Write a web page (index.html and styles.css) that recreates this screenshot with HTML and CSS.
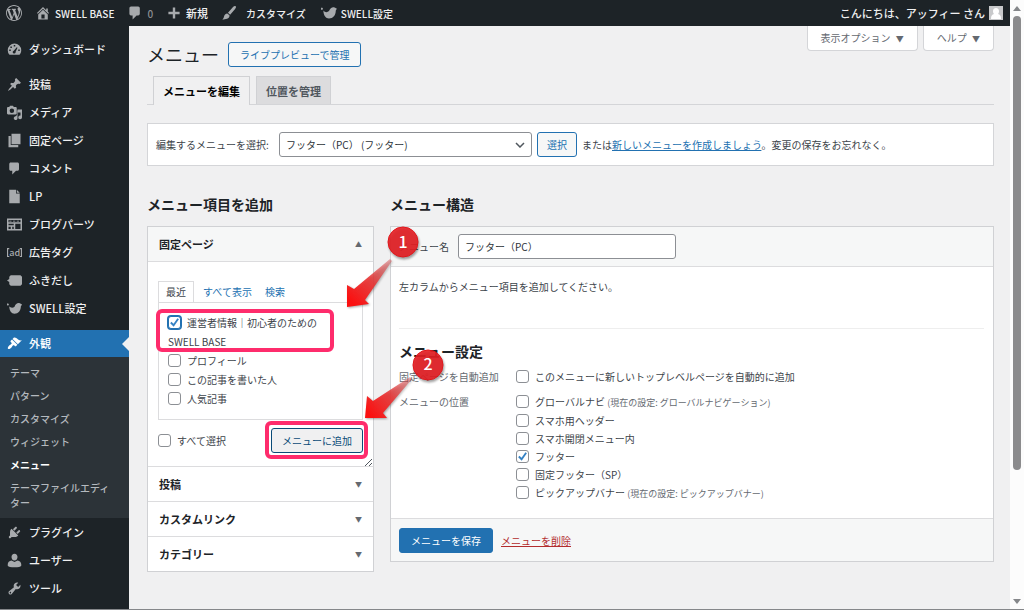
FILE: index.html
```html
<!DOCTYPE html>
<html lang="ja">
	<head>
		<meta charset="utf-8">
		<title>メニュー</title>
		<link rel="stylesheet" href="styles.css">
	</head>
	<body>
		<div class="screen">
			<header class="adminbar">
				<a href="#"><svg class="wp" viewBox="0 0 20 20"><path d="M20 10c0-5.510-4.490-10-10-10S0 4.490 0 10s4.490 10 10 10 10-4.490 10-10zM7.780 15.370L4.370 6.220c.55-.02 1.170-.08 1.170-.08.5-.06.44-1.130-.06-1.110 0 0-1.450.11-2.370.11-.18 0-.37 0-.58-.01C4.120 2.690 6.870 1.110 10 1.110c2.330 0 4.450.87 6.050 2.340-.68-.11-1.650.39-1.650 1.580 0 .74.45 1.360.9 2.100.35.61.55 1.360.55 2.460 0 1.490-1.400 5-1.400 5l-3.030-8.370c.54-.02.82-.17.82-.17.5-.05.44-1.250-.06-1.220 0 0-1.440.12-2.380.12-.87 0-2.330-.12-2.330-.12-.5-.03-.56 1.200-.06 1.220l.92.08 1.260 3.410zM17.410 10c.24-.64.74-1.870.43-4.250.7 1.290 1.050 2.710 1.050 4.250 0 3.290-1.730 6.240-4.400 7.780.97-2.590 1.940-5.200 2.920-7.780zM6.100 18.090C3.120 16.650 1.110 13.530 1.110 10c0-1.300.23-2.480.72-3.590C3.250 10.300 4.670 14.200 6.100 18.090zm4.030-6.630l2.580 6.980c-.86.29-1.760.45-2.710.45-.79 0-1.570-.11-2.290-.33.81-2.380 1.620-4.740 2.420-7.100z"/></svg></a>
				<a href="#"><svg viewBox="0 0 20 20"><path d="M16 8.500l1.530 1.530-1.060 1.060L10 4.600l-6.470 6.490-1.060-1.060L10 2.500l4 4v-2h2v4zm-6-2.460l6 5.990V18H4v-5.970zM12 17v-5H8v5h4z"/></svg>SWELL BASE</a>
				<a href="#" class="count"><svg viewBox="0 0 20 20"><path d="M5 2h9c1.100 0 2 .9 2 2v7c0 1.100-.9 2-2 2h-2l-5 5v-5H5c-1.100 0-2-.9-2-2V4c0-1.100.9-2 2-2z"/></svg>0</a>
				<a href="#" class="new"><svg viewBox="0 0 20 20"><path d="M17 8.500v3h-5.500V17h-3v-5.500H3v-3h5.500V3h3v5.500z"/></svg>新規</a>
				<a href="#" class="custom"><svg viewBox="0 0 20 20"><path d="M18.330 1.600c.9.700.3 2-.7 3.300l-6.200 7.200-2.700-2.300 6.300-7.200c1.100-1.200 2.400-1.700 3.300-1zM7.900 10.600l2.700 2.300c.2 1.500-.5 2.900-1.800 3.800-2 1.400-5 1.500-7.300 1.300 1.400-.7 1.900-1.800 2.200-3.300.4-2.200 2-4 4.200-4.100z"/></svg>カスタマイズ</a>
				<a href="#"><svg viewBox="0 0 20 20"><path d="M3 7c2 2.500 5 2.500 7 .5C11.500 4 14 2 17 3c1 .3 1.500 1 3 1.500-.5 1-1 1.500-1.500 2.500C18.500 13 15 17 10 17 6 17 3 13 3 7zM1 6a1.300 1.300 0 1 1 .1 0z"/></svg>SWELL設定</a>
				<a href="#" class="account">こんにちは、アッフィー さん<svg class="avatar" viewBox="0 0 14 14"><rect width="14" height="14" fill="#c8c9cb"/><path fill="#fff" d="M4 5c0-4 6-4 6 0 0 1.500-.5 2.500-1 3 2 .5 3 1.500 3 5H2c0-3.500 1-4.500 3-5-.5-.5-1-1.500-1-3z"/></svg></a>
			</header>
			<div class="wrap">
				<nav class="sidebar">
					<a href="#"><svg viewBox="0 0 20 20"><path fill-rule="evenodd" d="M10 2a9 9 0 0 1 9 9c0 2.500-.8 4.600-2.300 6H3.300A8.500 8.500 0 0 1 1 11a9 9 0 0 1 9-9zm-1 2v2h2V4zM4.500 6v2h2V6zM13 7l-4 4.500a2 2 0 1 0 2.500 1.500L14 7.500zM3 10v2h2v-2zm12 0v2h2v-2z"/></svg>ダッシュボード</a>
					<div class="group">
						<a href="#"><svg viewBox="0 0 20 20"><path d="M10.440 3.020l1.820-1.820 6.360 6.350-1.830 1.820c-1.050-.68-2.480-.57-3.410.36l-.75.75c-.92.93-1.040 2.350-.35 3.410l-1.830 1.820-2.410-2.410-2.800 2.790c-.42.420-3.380 2.710-3.800 2.290s1.860-3.390 2.280-3.810l2.790-2.790L4.100 9.360l1.830-1.820c1.050.69 2.480.57 3.400-.36l.75-.75c.93-.92 1.050-2.350.36-3.410z"/></svg>投稿</a>
						<a href="#"><svg viewBox="0 0 20 20"><path fill-rule="evenodd" d="M0 4c0-1 .7-1.500 1.500-1.500H3L4 1h4l1 1.500h2.500c.8 0 1.500.5 1.500 1.500v7c0 1-.7 1.500-1.500 1.500h-10C.7 12.500 0 12 0 11zm6.500.5a3 3 0 1 0 0 6 3 3 0 0 0 0-6zM14 6h6v10.500a2.500 2.500 0 1 1-2-2.400V10h-4v7.500a2.500 2.500 0 1 1-4-2l2-1 1-1z"/></svg>メディア</a>
						<a href="#"><svg viewBox="0 0 20 20"><path d="M6 1h12v14H6zM2 4h3v12h10v3H2z"/></svg>固定ページ</a>
						<a href="#"><svg viewBox="0 0 20 20"><path d="M5 2h9c1.100 0 2 .9 2 2v7c0 1.100-.9 2-2 2h-2l-5 5v-5H5c-1.100 0-2-.9-2-2V4c0-1.100.9-2 2-2z"/></svg>コメント</a>
						<a href="#"><svg viewBox="0 0 20 20"><path d="M3 1h9v5h5v13H3zM13 1l4 4h-4z"/></svg>LP</a>
						<a href="#"><svg viewBox="0 0 20 20"><path fill-rule="evenodd" d="M0 2h20v16H0zm2 2v3h16V4zm0 5v2h7V9zm0 4v3h3v-3zm5 0v3h2v-3zm4-4v7h7V9zM3 5h3v1H3zm5 0h3v1H8zm5 0h3v1h-3z"/></svg>ブログパーツ</a>
						<a href="#"><svg viewBox="0 0 20 20"><path d="M0 4h3v1.500H1.500v9H3V16H0zM20 4h-3v1.500h1.500v9H17V16h3z"/><text x="3" y="14" class="adtext">ad</text></svg>広告タグ</a>
						<a href="#"><svg viewBox="0 0 20 20"><path d="M5 3h13l2 2v10l-2 2H5l-2-2v-3L0 10l3-2V5z"/></svg>ふきだし</a>
						<a href="#"><svg viewBox="0 0 20 20"><path d="M3 7c2 2.500 5 2.500 7 .5C11.500 4 14 2 17 3c1 .3 1.500 1 3 1.500-.5 1-1 1.500-1.500 2.500C18.500 13 15 17 10 17 6 17 3 13 3 7zM1 6a1.300 1.300 0 1 1 .1 0z"/></svg>SWELL設定</a>
					</div>
					<a href="#" class="current"><svg viewBox="0 0 20 20"><path d="M14.480 11.060L7.410 3.990l1.500-1.500c.5-.56 2.300-.47 3.510.32 1.210.8 1.430 1.280 2.910 2.100 1.180.64 2.450 1.260 4.450.85zm-.71.71L6.700 4.700 4.930 6.470c-.39.39-.39 1.020 0 1.410l1.060 1.060c.39.39.39 1.030 0 1.420-.6.6-1.430 1.110-2.210 1.690-.35.26-.7.530-1.010.84C1.430 14.230.4 16.080 1.400 17.070c.99 1 2.840-.03 4.180-1.360.31-.31.58-.66.85-1.020.57-.78 1.080-1.610 1.690-2.210.39-.39 1.020-.39 1.410 0l1.060 1.060c.39.39 1.020.39 1.410 0z"/></svg>外観</a>
					<div class="submenu">
						<a href="#">テーマ</a>
						<a href="#">パターン</a>
						<a href="#">カスタマイズ</a>
						<a href="#">ウィジェット</a>
						<a href="#" class="on">メニュー</a>
						<a href="#">テーマファイルエディター</a>
					</div>
					<a href="#"><svg viewBox="0 0 20 20"><path d="M13.110 4.360L9.870 7.600 8 5.730l3.240-3.240c.35-.34 1.050-.2 1.560.32.52.51.66 1.210.31 1.550zm-8 1.770l.91-1.120 9.010 9.010-1.190.84c-.71.71-2.630 1.160-3.820 1.160H6.140L4.900 17.260c-.59.59-1.540.59-2.120 0-.59-.58-.59-1.530 0-2.120l1.240-1.240v-3.880c0-1.130.4-3.190 1.090-3.890zm7.260 3.970l3.240-3.240c.34-.35 1.040-.21 1.550.31.52.51.66 1.210.31 1.550l-3.240 3.250z"/></svg>プラグイン</a>
					<a href="#"><svg viewBox="0 0 20 20"><path d="M10 1c2.500 0 4 2 4 4.300S12.500 10 10 10 6 7.600 6 5.300 7.500 1 10 1zM6 10l4 2 4-2c3 .5 5 2.500 5 5v2c-1 1.500-4 2-9 2s-8-.5-9-2v-2c0-2.500 2-4.500 5-5z"/></svg>ユーザー</a>
					<a href="#"><svg viewBox="0 0 20 20"><path d="M16.680 9.770c-1.340 1.340-3.300 1.670-4.950.99l-5.410 6.520c-.99.99-2.590.99-3.580 0s-.99-2.590 0-3.570l6.520-5.420c-.68-1.650-.35-3.610.99-4.950 1.280-1.280 3.120-1.620 4.720-1.060l-2.890 2.890 2.820 2.820 2.860-2.870c.53 1.580.18 3.390-1.080 4.650zM3.810 16.210c.4.39 1.040.39 1.430 0 .4-.4.4-1.040 0-1.430-.39-.4-1.030-.4-1.430 0-.39.39-.39 1.030 0 1.430z"/></svg>ツール</a>
					<a href="#" aria-label="設定"><svg viewBox="0 0 20 20"><path d="M2 0h16v18H2z"/></svg></a>
				</nav>
				<main class="content">
					<div class="top">
						<h1>メニュー</h1>
						<button class="btn live">ライブプレビューで管理</button>
						<div class="screen_meta">
							<button>表示オプション <span>▼</span></button>
							<button>ヘルプ <span>▼</span></button>
						</div>
					</div>
					<div class="tabs">
						<a href="#" class="on">メニューを編集</a>
						<a href="#">位置を管理</a>
					</div>
					<div class="manage">
						<label for="menu_select">編集するメニューを選択:</label>
						<div class="select_box">
							<select id="menu_select"><option>フッター（PC） (フッター)</option></select>
							<svg viewBox="0 0 10 6"><path d="M1 1l4 4 4-4" fill="none" stroke="#50575e" stroke-width="1.500"/></svg>
						</div>
						<button class="btn">選択</button>
						<span>または<a href="#">新しいメニューを作成しましょう</a>。変更の保存をお忘れなく。</span>
					</div>
					<div class="columns">
						<section class="left">
							<h2>メニュー項目を追加</h2>
							<div class="box">
								<button class="acc open">固定ページ<span>▲</span></button>
								<div class="inside">
									<div class="small_tabs">
										<a href="#" class="on">最近</a>
										<a href="#">すべて表示</a>
										<a href="#">検索</a>
									</div>
									<div class="panel">
										<label><input type="checkbox" class="focus" checked>運営者情報｜初心者のための<br>SWELL BASE</label>
										<label><input type="checkbox">プロフィール</label>
										<label><input type="checkbox">この記事を書いた人</label>
										<label><input type="checkbox">人気記事</label>
									</div>
									<div class="add_row">
										<label><input type="checkbox">すべて選択</label>
										<button class="btn add">メニューに追加</button>
									</div>
									<svg class="grip" viewBox="0 0 8 8"><path d="M1 8l7-7M5 8l3-3" stroke="#50575e" fill="none"/></svg>
								</div>
								<button class="acc">投稿<span>▼</span></button>
								<button class="acc">カスタムリンク<span>▼</span></button>
								<button class="acc">カテゴリー<span>▼</span></button>
							</div>
						</section>
						<section class="right">
							<h2>メニュー構造</h2>
							<div class="box">
								<div class="name_row">
									<label for="menu_name">メニュー名</label>
									<input type="text" id="menu_name" value="フッター（PC）">
								</div>
								<div class="edit">
									<p>左カラムからメニュー項目を追加してください。</p>
									<h3>メニュー設定</h3>
									<div class="setting">
										<div class="name">固定ページを自動追加</div>
										<div><label><input type="checkbox">このメニューに新しいトップレベルページを自動的に追加</label></div>
									</div>
									<div class="setting">
										<div class="name">メニューの位置</div>
										<div>
											<label><input type="checkbox">グローバルナビ <small>(現在の設定: グローバルナビゲーション)</small></label>
											<label><input type="checkbox">スマホ用ヘッダー</label>
											<label><input type="checkbox">スマホ開閉メニュー内</label>
											<label><input type="checkbox" checked>フッター</label>
											<label><input type="checkbox">固定フッター（SP）</label>
											<label><input type="checkbox">ピックアップバナー <small>(現在の設定: ピックアップバナー)</small></label>
										</div>
									</div>
								</div>
								<div class="foot">
									<button class="btn save">メニューを保存</button>
									<a href="#">メニューを削除</a>
								</div>
							</div>
						</section>
					</div>
				</main>
			</div>
		</div>
		<div class="scrollbar"><span class="up"></span><div class="thumb"></div><span class="down"></span></div>
		<svg class="marks" width="450" height="470">
			<defs>
				<linearGradient id="g1" gradientUnits="userSpaceOnUse" x1="391" y1="260" x2="353" y2="303">
					<stop offset="0" stop-color="#d8474a" stop-opacity=".4"/>
					<stop offset=".5" stop-color="#e93434" stop-opacity=".9"/>
					<stop offset="1" stop-color="#fb1010"/>
				</linearGradient>
				<linearGradient id="g2" gradientUnits="userSpaceOnUse" x1="411" y1="378" x2="370" y2="415">
					<stop offset="0" stop-color="#d8474a" stop-opacity=".4"/>
					<stop offset=".5" stop-color="#e93434" stop-opacity=".9"/>
					<stop offset="1" stop-color="#fb1010"/>
				</linearGradient>
			</defs>
			<rect x="158" y="311" width="174" height="39" rx="4"/>
			<rect x="267" y="423" width="99" height="34" rx="4"/>
			<path class="arrow" fill="url(#g1)" d="M390 259L354 289 347 285V307L369 304 365 300 392 261z"/>
			<path class="arrow" fill="url(#g2)" d="M410 377L373 401 367 396 365 418H387L383 413 412 379z"/>
			<circle cx="403" cy="242" r="15"/>
			<text x="403" y="248">1</text>
			<circle cx="428" cy="365" r="15"/>
			<text x="428" y="370">2</text>
		</svg>
	</body>
</html>
```
FILE: styles.css
```css
*{box-sizing:border-box;}
body{margin:0;height:100vh;overflow:hidden;display:flex;background:#f0f0f1;border-bottom:1px solid #85878a;color:#3c434a;font:10px/19px "Noto Sans CJK JP",sans-serif;}
button,input,select{font:inherit;color:inherit;margin:0;}
h1,h2,h3,p{margin:0;}
a{color:#2271b1;}
svg{flex:none;}
.screen{flex:1;min-width:0;display:flex;flex-direction:column;}

/* top bar */
.adminbar{height:26px;flex:none;display:flex;align-items:center;background:#1d2327;padding:0 7px 0 6px;font-weight:500;}
.adminbar a{display:flex;align-items:center;gap:4px;margin-right:13px;color:#f0f0f1;text-decoration:none;}
.adminbar svg{width:16px;height:16px;fill:#a7aaad;}
.adminbar .count{color:#8c8f94;}
.adminbar .new{font-size:11px;}
.adminbar .custom{gap:9px;margin-right:15px;}
.adminbar .account{margin:0 0 0 auto;font-size:11px;}
.adminbar .avatar{width:14px;height:14px;}

/* side menu */
.wrap{flex:1;min-height:0;display:flex;}
.sidebar{width:129px;flex:none;background:#1d2327;padding-top:9px;overflow:hidden;}
.sidebar a{display:flex;align-items:center;gap:7px;height:28px;padding:0 7px;font-size:11px;font-weight:500;color:#f0f0f1;text-decoration:none;}
.sidebar svg{width:15px;height:15px;fill:#a7aaad;}
.adtext{font-size:12px;}
.sidebar .group{padding:7px 0 8px;}
.sidebar .current{position:relative;height:27px;background:#2271b1;color:#fff;}
.sidebar .current svg{fill:#fff;}
.current:after{content:"";position:absolute;right:0;top:7px;border:7px solid transparent;border-left:0;border-right-color:#f0f0f1;}
.submenu{background:#2c3338;padding:4px 0;}
.sidebar .submenu a{display:block;height:auto;padding:4px 10px;line-height:15px;font-size:10px;color:#b4b9be;}
.sidebar .submenu .on{color:#fff;font-weight:700;}

/* page head */
.content{flex:1;min-width:0;padding:0 16px 0 18px;}
.top{display:flex;align-items:flex-start;height:50px;}
h1{font-size:18px;line-height:56px;font-weight:400;color:#1d2327;}
.btn{height:25px;padding:0 9px;border:1px solid #2271b1;border-radius:3px;background:#f6f7f7;color:#2271b1;white-space:nowrap;line-height:19px;}
.live{margin:16px 0 0 9px;padding:0 11px;}
.screen_meta{margin-left:auto;display:flex;gap:5px;}
.screen_meta button{height:25px;padding:0 13px;background:#fff;border:1px solid #d4d5d8;border-top:0;border-radius:0 0 4px 4px;color:#646970;}
.screen_meta span{margin-left:3px;font-size:8px;}
.tabs{display:flex;gap:6px;padding-left:6px;border-bottom:1px solid #d4d5d8;height:29px;}
.tabs a{height:28px;padding:0 9px;border:1px solid #d0d1d4;border-bottom:0;background:#dcdcde;color:#50575e;font-size:11px;line-height:29px;font-weight:700;text-decoration:none;}
.tabs .on{height:29px;background:#f0f0f1;color:#000;}
.manage{display:flex;align-items:center;gap:5px;height:43px;margin-top:18px;padding:0 8px;background:#fff;border:1px solid #d4d5d8;}
.manage label{width:118px;}
.select_box{position:relative;width:253px;}
.select_box select{appearance:none;width:100%;height:25px;padding:0 6px;border:1px solid #8c8f94;border-radius:3px;background:#fff;color:#2c3338;}
.select_box svg{position:absolute;right:7px;top:10px;width:10px;height:6px;}

/* two columns */
.columns{display:flex;gap:16px;margin-top:28px;}
.left{width:227px;flex:none;}
.right{flex:1;}
h2{font-size:14px;line-height:20px;margin-bottom:12px;color:#1d2327;}
.box{border:1px solid #d0d1d4;background:#fff;}
.acc{display:flex;justify-content:space-between;align-items:center;width:100%;height:35px;padding:0 11px;border:0;border-top:1px solid #dcdcde;background:#fff;color:#1d2327;font-size:11px;font-weight:700;}
.acc span{font-size:7px;color:#646970;}
.open{border-top:0;border-bottom:1px solid #dcdcde;background:#f6f7f7;}
.inside{position:relative;padding:19px 10px 14px;}
.small_tabs{display:flex;gap:5px;}
.small_tabs a{height:21px;padding:0 4px;line-height:21px;text-decoration:none;}
.small_tabs .on{padding:0 7px;border:1px solid #dcdcde;border-bottom:0;color:#3c434a;line-height:19px;}
.panel{width:205px;height:118px;padding:10px 9px;border:1px solid #dcdcde;}
.panel label,.edit label{display:block;}
input[type=checkbox]{appearance:none;width:13px;height:13px;margin:0 6px 0 0;border:1px solid #8c8f94;border-radius:3px;background:#fff;vertical-align:-2px;}
input[type=checkbox]:checked{background:#fff url("data:image/svg+xml,%3Csvg xmlns='http://www.w3.org/2000/svg' viewBox='0 0 12 12'%3E%3Cpath d='M2 6l3 3 5-7' fill='none' stroke='%233582c4' stroke-width='2'/%3E%3C/svg%3E") center/11px no-repeat;}
input.focus{border-color:#2271b1;box-shadow:0 0 0 1px #2271b1;}
.add_row{display:flex;align-items:center;justify-content:space-between;height:24px;margin-top:8px;}
.add{padding:0 10px;background:#f0f0f1;color:#0a4b78;border-color:#0a4b78;}
.grip{position:absolute;right:1px;bottom:0;width:8px;height:8px;}
.name_row{display:flex;align-items:center;gap:7px;height:40px;padding:0 8px;background:#f6f7f7;border-bottom:1px solid #dcdcde;}
.name_row label{width:52px;}
.name_row input{width:218px;height:25px;padding:0 6px;border:1px solid #8c8f94;border-radius:3px;background:#fff;color:#2c3338;}
.edit{padding:10px 9px 15px 8px;}
.edit p{height:52px;border-bottom:1px solid #eee;}
h3{margin-top:12px;font-size:14px;line-height:20px;color:#1d2327;}
.setting{display:flex;margin-top:7px;line-height:18px;}
.setting .name{width:117px;color:#646970;}
small{font-size:9px;color:#646970;}
.foot{display:flex;align-items:center;gap:8px;height:43px;padding:0 8px;background:#f6f7f7;border-top:1px solid #dcdcde;}
.save{padding:0 11px;background:#2271b1;color:#fff;}
.foot a{color:#b32d2e;}

.scrollbar{width:14px;flex:none;display:flex;flex-direction:column;align-items:center;background:#fcfcfc;padding:6px 0 5px;}
.up,.down{border:4px solid transparent;}
.up{border-top:0;border-bottom:5px solid #85878a;}
.down{margin-top:auto;border-bottom:0;border-top:5px solid #85878a;}
.thumb{width:8px;height:76%;margin-top:5px;border-radius:4px;background:#8b8b8d;}

/* numbered callouts over the page */
.marks{position:absolute;left:0;top:0;pointer-events:none;}
.marks rect{fill:none;stroke:#fe2c6c;stroke-width:4;}
.marks circle{fill:#e41e24;fill-opacity:.9;stroke:#e0161b;filter:drop-shadow(1px 2px 1px rgba(0,0,0,.4));}
.marks text{fill:#fff;font-size:16px;font-weight:500;text-anchor:middle;}
.arrow{filter:drop-shadow(1px 1px 1px rgba(0,0,0,.35));}
```
